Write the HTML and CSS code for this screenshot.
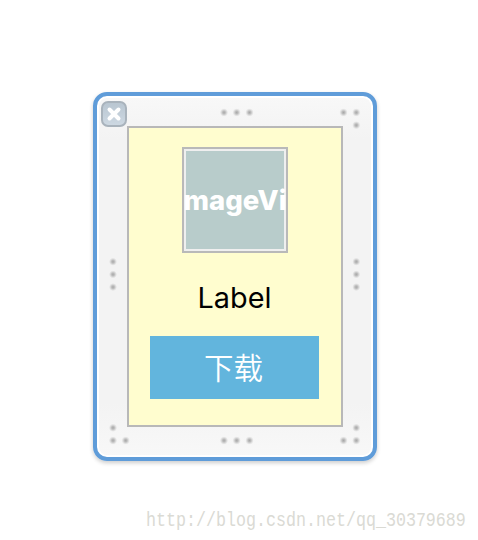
FILE: index.html
```html
<!DOCTYPE html>
<html lang="zh">
<head>
<meta charset="utf-8">
<title>View</title>
<link rel="stylesheet" href="styles.css">
</head>
<body>
<main class="frame">
  <svg class="handles" viewBox="97 96 276 361" aria-hidden="true">
    <defs>
      <radialGradient id="dot">
        <stop offset="0" stop-color="#a8a8a8"/>
        <stop offset=".35" stop-color="#bcbcbc"/>
        <stop offset=".7" stop-color="#dedede"/>
        <stop offset="1" stop-color="#f3f3f3"/>
      </radialGradient>
    </defs>
    <g fill="url(#dot)">
      <circle cx="224" cy="112.5" r="4"/><circle cx="236.7" cy="112.5" r="4"/><circle cx="249.5" cy="112.5" r="4"/>
      <circle cx="343.5" cy="112.5" r="4"/><circle cx="356.3" cy="112.5" r="4"/><circle cx="356.3" cy="125.2" r="4"/>
      <circle cx="113" cy="261.7" r="4"/><circle cx="113" cy="274.4" r="4"/><circle cx="113" cy="287.1" r="4"/>
      <circle cx="356.3" cy="261.7" r="4"/><circle cx="356.3" cy="274.4" r="4"/><circle cx="356.3" cy="287.1" r="4"/>
      <circle cx="113" cy="427.8" r="4"/><circle cx="113" cy="440.5" r="4"/><circle cx="125.7" cy="440.5" r="4"/>
      <circle cx="224" cy="440.5" r="4"/><circle cx="236.7" cy="440.5" r="4"/><circle cx="249.5" cy="440.5" r="4"/>
      <circle cx="343.5" cy="440.5" r="4"/><circle cx="356.3" cy="440.5" r="4"/><circle cx="356.3" cy="427.8" r="4"/>
    </g>
  </svg>
  <button class="close" aria-label="Close">
    <svg viewBox="0 0 26 26"><path d="M8.5 8.5L17.5 17.5M17.5 8.5L8.5 17.5"/></svg>
  </button>
  <section class="canvas">
    <div class="image"><span>mageVi</span></div>
    <div class="label">Label</div>
    <button class="download">下载</button>
  </section>
</main>
<footer class="watermark">http://blog.csdn.net/qq_30379689</footer>
</body>
</html>
```
FILE: styles.css
```css
* { box-sizing: border-box; }
body {
  margin: 0;
  width: 478px;
  height: 540px;
  overflow: hidden;
  background: #fff;
  padding-top: 92px;
  font-family: Inter, "Noto Sans CJK SC", sans-serif;
}
button { border: 0; padding: 0; font: inherit; }
.frame {
  position: relative;
  width: 284px;
  height: 369px;
  margin-left: 93px;
  padding: 30px;
  border: 4px solid #5f9cd9;
  border-radius: 14px;
  background: linear-gradient(#f8f8f8, #f3f3f3 12%, #f3f3f3 85%, #f8f8f8);
  box-shadow: inset 0 0 0 2px #fff, 0 2px 4px rgba(0, 0, 0, .2);
}
.handles {
  position: absolute;
  left: 0;
  top: 0;
  width: 276px;
  height: 361px;
}
.close {
  position: absolute;
  left: 4px;
  top: 5px;
  width: 26px;
  height: 26px;
  border: 2px solid #a9b3bc;
  border-radius: 7px;
  background: linear-gradient(#b9c6d1, #cdd8e2);
}
.close svg {
  display: block;
  width: 26px;
  height: 26px;
  margin: -2px;
  fill: none;
  stroke: #fff;
  stroke-width: 4;
  stroke-linecap: round;
}
.canvas {
  display: flex;
  flex-direction: column;
  align-items: center;
  height: 301px;
  padding-top: 19px;
  border: 2px solid #b8b8b8;
  background: #fffdcf;
}
.image {
  display: flex;
  align-items: center;
  justify-content: center;
  width: 106px;
  height: 106px;
  border: 2px solid #b9b9b9;
  background: #b8cccb;
  box-shadow: inset 0 0 0 2px #efefef;
  overflow: hidden;
  color: #fff;
  font-size: 27.5px;
  font-weight: 800;
}
.label {
  margin: 27px 1px 0 0;
  height: 36px;
  line-height: 36px;
  font-size: 28.8px;
  color: #000;
}
.download {
  margin: 20px 2px 0 0;
  padding-right: 1px;
  width: 169px;
  height: 63px;
  line-height: 65px;
  background: #62b5dd;
  color: #fff;
  font-size: 29.5px;
  font-weight: 350;
}
.watermark {
  margin: 48px 0 0 146px;
  height: 24px;
  line-height: 24px;
  font-family: "Liberation Mono", monospace;
  font-size: 16.67px;
  color: #dadad4;
  white-space: nowrap;
  transform: scaleY(1.17);
}
```
